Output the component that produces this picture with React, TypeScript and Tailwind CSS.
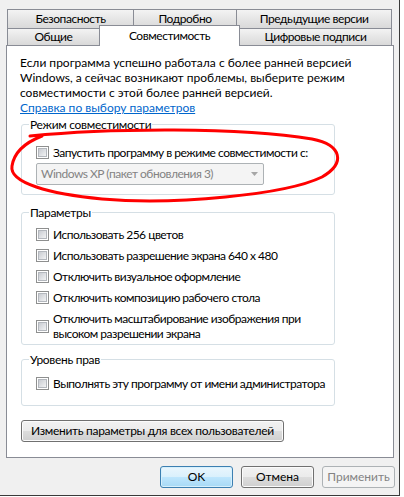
import React from 'react';

const btnBase =
  'h-[22px] rounded-[3px] border flex items-center justify-center text-[12px] leading-none whitespace-nowrap';
const btnNormal =
  'border-[#707070] bg-[linear-gradient(to_bottom,#f2f2f2_0%,#ebebeb_50%,#dddddd_50%,#cfcfcf_100%)] shadow-[inset_0_0_0_1px_#fbfbfb] text-black';
const btnDefault =
  'border-[#3c7fb1] bg-[linear-gradient(to_bottom,#eaf6fd_0%,#d9f0fc_50%,#bee6fd_50%,#a7d9f5_100%)] shadow-[inset_0_0_0_1px_#d6f0fc] text-black';
const btnDisabled = 'border-[#adb2b5] bg-[#f4f4f4] text-[#838383]';

function Checkbox() {
  return (
    <div className="w-[13px] h-[13px] shrink-0 border border-[#8e8f8f] bg-white flex items-center justify-center">
      <div className="w-[9px] h-[9px] border border-[#b3b7bd] bg-gradient-to-br from-[#c9ccd2] to-[#f2f3f4]" />
    </div>
  );
}

function CheckRow({ children }: { children: React.ReactNode }) {
  return (
    <div className="flex items-center gap-[4px]">
      <Checkbox />
      <div className="leading-[15px] whitespace-nowrap tracking-[-0.5px]">{children}</div>
    </div>
  );
}

function Tab({ width, children, last }: { width: string; children: React.ReactNode; last?: boolean }) {
  return (
    <div
      className={`${width} h-full border-t border-l ${last ? 'border-r' : ''} border-[#898c95] bg-gradient-to-b from-[#f3f3f3] to-[#d9d9d9] flex items-center justify-center tracking-[-0.45px]`}
    >
      {children}
    </div>
  );
}

function Group({ title, className, children }: { title: string; className: string; children: React.ReactNode }) {
  return (
    <fieldset className={`ml-[14px] w-[314px] min-w-0 border border-[#d5dfe5] rounded-[3px] pl-[14px] ${className}`}>
      <legend className="-ml-[7px] px-[1px] leading-[15px] tracking-[-0.3px]">{title}</legend>
      {children}
    </fieldset>
  );
}

export default function App() {
  return (
    <div className="relative w-[404px] h-[497px] bg-white overflow-hidden font-['Lato','Liberation_Sans',Arial,sans-serif] text-[12px] text-black">
      <div className="w-[400px] h-[496px] bg-[#f0f0f0] border-r border-b border-[#3a3a3a]">
        {/* Tabs */}
        <div className="pl-[7px] pt-[9px]">
          <div className="flex h-[19px]">
            <Tab width="w-[126px]">Безопасность</Tab>
            <Tab width="w-[103px]">Подробно</Tab>
            <Tab width="w-[156px]" last>
              Предыдущие версии
            </Tab>
          </div>
          <div className="flex h-[17px]">
            <Tab width="w-[92px]">Общие</Tab>
            <div className="relative z-10 -mt-[3px] h-[21px] w-[141px] border-t border-l border-r border-[#898c95] bg-white flex items-center justify-center tracking-[-0.45px]">
              Совместимость
            </div>
            <div className="w-[152px] h-full border-t border-r border-[#898c95] bg-gradient-to-b from-[#f3f3f3] to-[#d9d9d9] flex items-center justify-center tracking-[-0.45px]">
              Цифровые подписи
            </div>
          </div>
        </div>

        {/* Panel */}
        <div className="ml-[6px] w-[388px] h-[413px] border border-[#898c95] bg-white pt-[9px]">
          <p className="pl-[13px] leading-[15px]">
            Если программа успешно работала с более ранней версией
            <br />
            Windows, а сейчас возникают проблемы, выберите режим
            <br />
            совместимости с этой более ранней версией.
          </p>
          <div className="pl-[13px] leading-[15px]">
            <span className="text-[#0066cc] underline">Справка по выбору параметров</span>
          </div>

          <Group title="Режим совместимости" className="mt-[2px] pt-[13px] pb-[9px]">
            <CheckRow>Запустить программу в режиме совместимости с:</CheckRow>
            <div className="mt-[3px] w-[228px] h-[22px] border border-[#adb2b5] bg-[#f4f4f4] rounded-[2px] flex items-center justify-between pl-[4px] pr-[5px] text-[#838383]">
              <span className="tracking-[-0.5px] whitespace-nowrap">Windows XP (пакет обновления 3)</span>
              <svg width="7" height="4" viewBox="0 0 7 4">
                <path d="M0 0h7L3.5 4z" fill="#a6a6a6" />
              </svg>
            </div>
          </Group>

          <Group title="Параметры" className="mt-[10px] pt-[7px] pb-[3px]">
            <div className="flex flex-col gap-[6px]">
              <CheckRow>Использовать 256 цветов</CheckRow>
              <CheckRow>Использовать разрешение экрана 640 x 480</CheckRow>
              <CheckRow>Отключить визуальное оформление</CheckRow>
              <CheckRow>Отключить композицию рабочего стола</CheckRow>
              <CheckRow>
                Отключить масштабирование изображения при
                <br />
                высоком разрешении экрана
              </CheckRow>
            </div>
          </Group>

          <Group title="Уровень прав" className="mt-[7px] pt-[9px] pb-[14px]">
            <CheckRow>Выполнять эту программу от имени администратора</CheckRow>
          </Group>

          <button className={`${btnBase} ${btnNormal} mt-[14px] ml-[14px] w-[263px] tracking-[-0.3px]`}>
            Изменить параметры для всех пользователей
          </button>
        </div>

        {/* Dialog buttons */}
        <div className="mt-[8px] flex justify-end gap-[8px] pr-[4px]">
          <button className={`${btnBase} ${btnDefault} w-[73px]`}>OK</button>
          <button className={`${btnBase} ${btnNormal} w-[73px]`}>Отмена</button>
          <button className={`${btnBase} ${btnDisabled} w-[73px]`}>Применить</button>
        </div>
      </div>

      {/* hand-drawn red circle */}
      <svg
        className="absolute left-0 top-0 pointer-events-none"
        width="404"
        height="497"
        viewBox="0 0 404 497"
      >
        <path
          d="M30 136 C 110 128, 240 127, 312 139 C 342 145, 346 163, 322 177 C 285 195, 175 205, 102 199 C 50 194, 9 183, 12 166 C 14 153, 24 143, 42 136"
          fill="none"
          stroke="#ff0000"
          strokeWidth="3"
          strokeLinecap="round"
        />
      </svg>
    </div>
  );
}
